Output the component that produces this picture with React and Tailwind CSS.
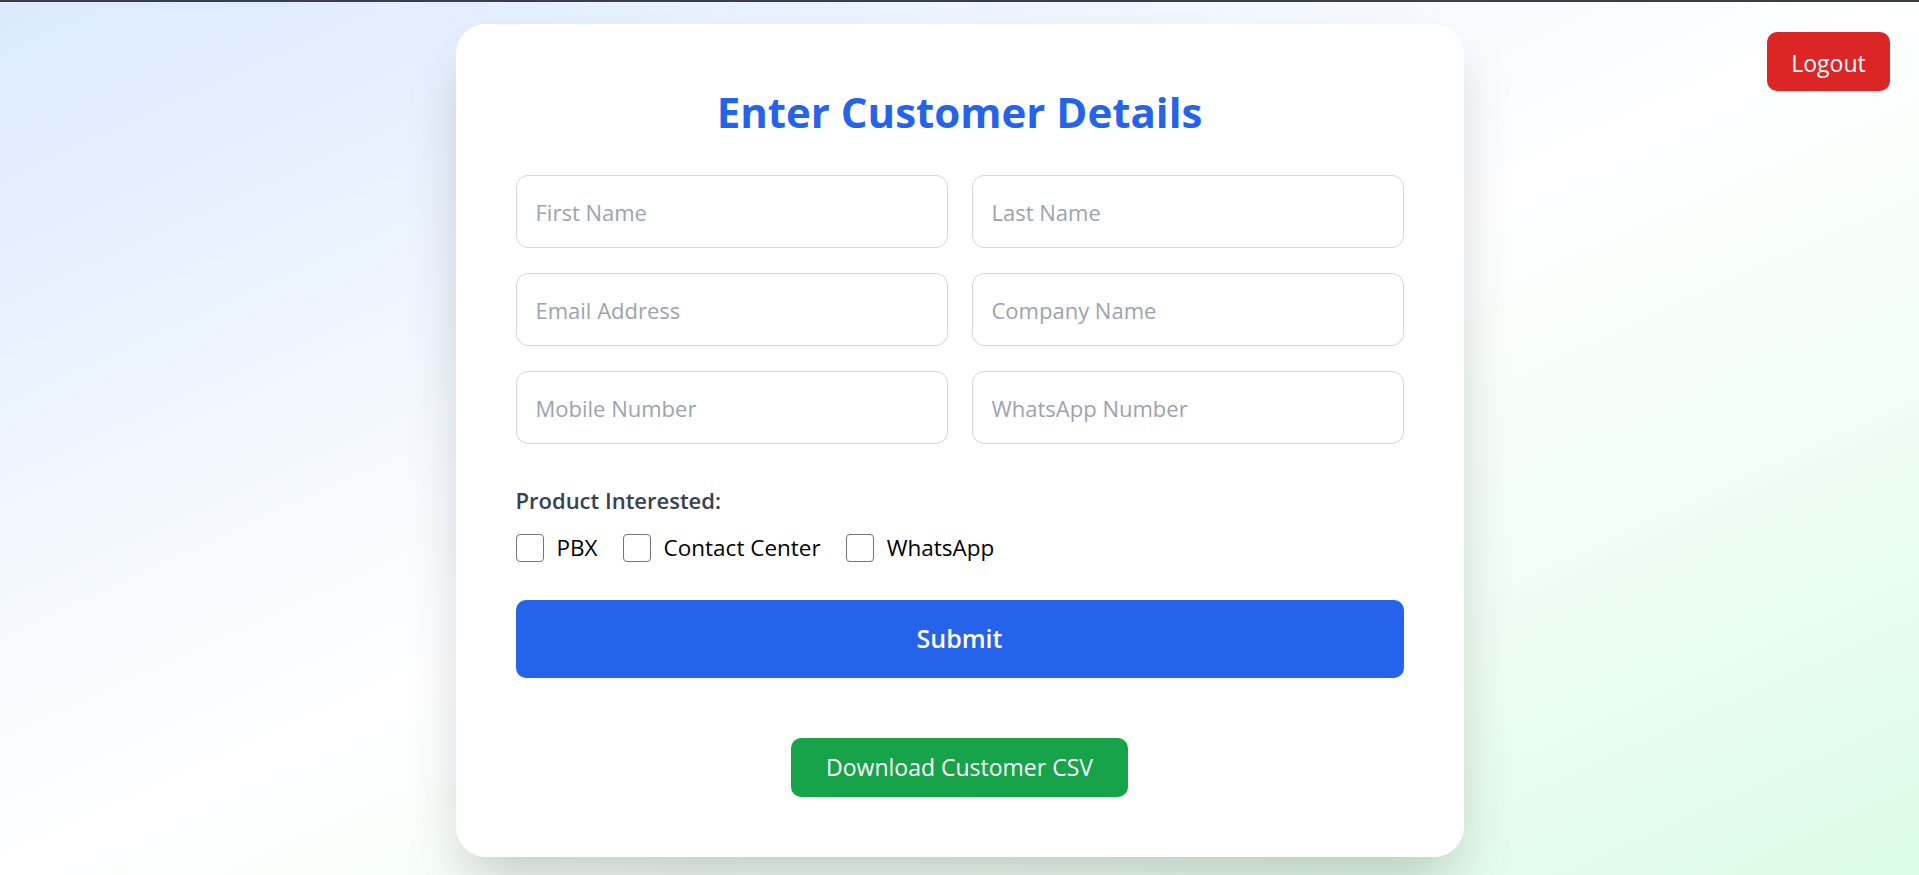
import React, { useState } from "react";

const fields = [
  ["First Name", "Last Name"],
  ["Email Address", "Company Name"],
  ["Mobile Number", "WhatsApp Number"],
];

const products = ["PBX", "Contact Center", "WhatsApp"];

export default function App() {
  const [form, setForm] = useState({});
  const [picked, setPicked] = useState([]);

  const toggle = (p) =>
    setPicked((prev) => (prev.includes(p) ? prev.filter((x) => x !== p) : [...prev, p]));

  return (
    <div className="min-h-screen w-full bg-gradient-to-br from-[#dbeafe] via-white to-[#dcfce7] font-['Open_Sans',sans-serif]">
      <div className="h-[2px] bg-[#3b3e48]" />

      {/* Logout sits over the page corner */}
      <button className="absolute top-[32px] right-[29px] h-[59px] w-[123px] rounded-[10px] bg-[#dc2626] pt-[3px] text-[23px] text-white">
        Logout
      </button>

      <div className="pt-[22px] pb-[18px]">
        <div className="mx-auto w-[1008px] rounded-[30px] bg-white px-[60px] pt-[63px] pb-[60px] shadow-[0_30px_60px_-12px_rgba(0,0,0,0.22)]">
          <h1 className="text-center text-[42px] leading-[50px] font-bold text-[#2563eb]">
            Enter Customer Details
          </h1>

          <div className="mt-[38px] grid grid-cols-2 gap-x-[24px] gap-y-[25px]">
            {fields.flat().map((f) => (
              <input
                key={f}
                placeholder={f}
                value={form[f] || ""}
                onChange={(e) => setForm({ ...form, [f]: e.target.value })}
                className="h-[73px] w-full rounded-[12px] border border-[#d1d5db] px-[19px] text-[22px] text-gray-800 placeholder:text-[#9ca3af] outline-none"
              />
            ))}
          </div>

          <div className="mt-[41px] text-[22px] leading-[30px] font-semibold text-[#374151]">Product Interested:</div>
          <div className="mt-[16px] flex items-center gap-[25px]">
            {products.map((p) => (
              <label key={p} className="flex items-center gap-[13px] text-[22.5px] leading-[34px] text-black">
                <input
                  type="checkbox"
                  checked={picked.includes(p)}
                  onChange={() => toggle(p)}
                  className="h-[28px] w-[28px] appearance-none rounded-[4px] border border-[#767676] bg-white checked:bg-[#2563eb]"
                />
                {p}
              </label>
            ))}
          </div>

          <button className="mt-[35px] h-[78px] w-full rounded-[10px] bg-[#2563eb] text-[25px] font-semibold text-white">
            Submit
          </button>

          <div className="mt-[60px] flex justify-center">
            <button className="h-[59px] w-[337px] rounded-[10px] bg-[#16a34a] text-[23px] text-white">
              Download Customer CSV
            </button>
          </div>
        </div>
      </div>
    </div>
  );
}
